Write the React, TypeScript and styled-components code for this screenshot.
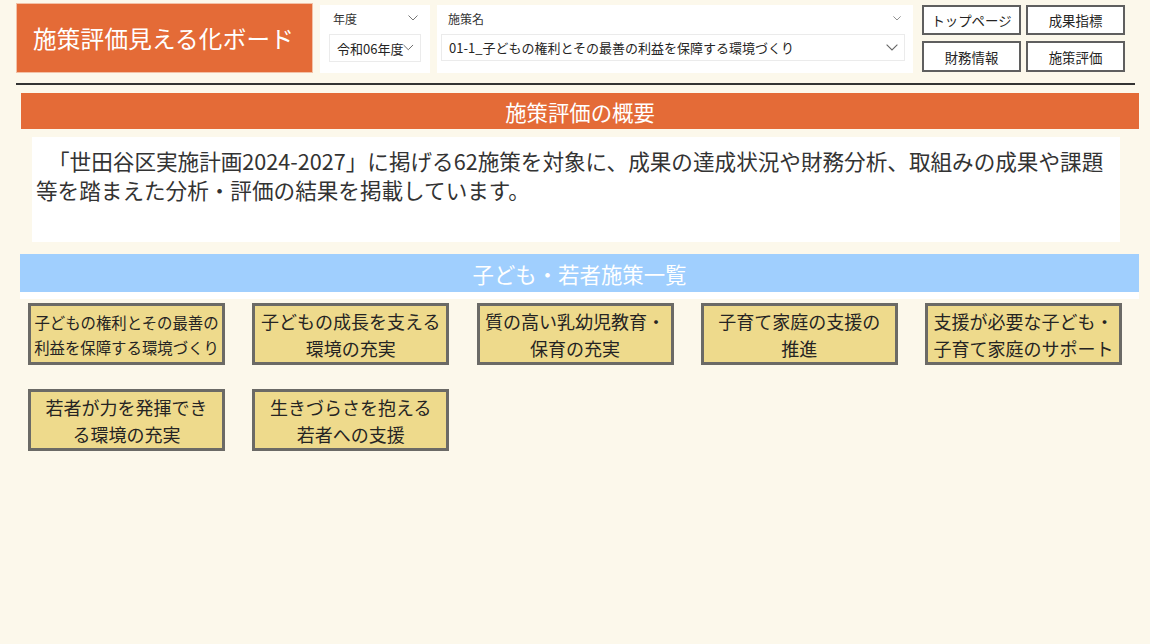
import React from "react";
import styled, { createGlobalStyle } from "styled-components";

const GlobalStyle = createGlobalStyle`
  html, body {
    margin: 0;
    padding: 0;
    background: #fcf8eb;
  }
  body {
    font-family: "Noto Sans CJK JP", "Noto Sans", sans-serif;
    color: #333;
  }
`;

const Page = styled.div`
  width: 1150px;
  height: 644px;
  background: #fcf8eb;
  overflow: hidden;
`;

const Header = styled.div`
  display: flex;
  align-items: flex-start;
  padding: 3px 0 0 16px;
`;

const TitleBox = styled.div`
  width: 297px;
  height: 70px;
  box-sizing: border-box;
  background: #e46b37;
  border: 1px solid #f3c1a6;
  color: #fff;
  font-size: 23.6px;
  display: flex;
  align-items: center;
  padding-left: 16px;
  letter-spacing: 0.2px;
`;

const Slicer = styled.div<{ $width: number; $ml: number }>`
  width: ${(p) => p.$width}px;
  height: 68px;
  margin: 2px 0 0 ${(p) => p.$ml}px;
  background: #fff;
  box-sizing: border-box;
`;

const SlicerHead = styled.div<{ $pl: number }>`
  display: flex;
  justify-content: space-between;
  align-items: center;
  height: 24px;
  padding: 1px 12px 0 ${(p) => p.$pl}px;
  font-size: 12px;
  color: #333;
`;

const Dropdown = styled.div<{ $width: number; $ml: number; $h: number; $fs: number }>`
  width: ${(p) => p.$width}px;
  height: ${(p) => p.$h}px;
  margin: 4px 0 0 ${(p) => p.$ml}px;
  box-sizing: border-box;
  border: 1px solid #ebebeb;
  display: flex;
  align-items: center;
  justify-content: space-between;
  padding: 0 6px 0 7px;
  font-size: ${(p) => p.$fs}px;
  color: #252423;
  white-space: nowrap;
`;

const ButtonGrid = styled.div`
  display: grid;
  grid-template-columns: 99px 99px;
  grid-template-rows: 30px 31px;
  column-gap: 5px;
  row-gap: 6px;
  margin: 2px 0 0 9px;
`;

const NavButton = styled.button`
  background: #fff;
  border: 2px solid #5f5f5f;
  box-sizing: border-box;
  font-family: "Noto Sans CJK JP", sans-serif;
  font-size: 13.4px;
  color: #252423;
  padding: 0;
  cursor: pointer;
`;

const Divider = styled.div`
  width: 1119px;
  height: 2px;
  margin: 10px 0 0 16px;
  background: #333;
`;

const SectionBar = styled.div<{ $bg: string; $h: number; $ml: number; $w: number; $mt: number }>`
  width: ${(p) => p.$w}px;
  height: ${(p) => p.$h}px;
  margin: ${(p) => p.$mt}px 0 0 ${(p) => p.$ml}px;
  background: ${(p) => p.$bg};
  color: #fff;
  font-size: 21.4px;
  display: flex;
  align-items: center;
  justify-content: center;
  box-sizing: border-box;
`;

const WhiteStrip = styled.div`
  width: 1119px;
  height: 7px;
  margin-left: 20px;
  background: #fff;
`;

const Summary = styled.div`
  width: 1088px;
  height: 105px;
  margin: 8px 0 0 32px;
  background: #fff;
  box-sizing: border-box;
  padding: 9px 0 0 4px;
  font-size: 21.6px;
  line-height: 29px;
  color: #333;
  text-indent: 12px;
  white-space: nowrap;
`;

const CardGrid = styled.div`
  width: 1094px;
  margin: 4px 0 0 28px;
  display: grid;
  grid-template-columns: repeat(5, 197px);
  justify-content: space-between;
  row-gap: 24px;
`;

const Card = styled.div<{ $small?: boolean }>`
  height: 62px;
  box-sizing: border-box;
  background: #eeda8c;
  border: 3px solid #6b6a66;
  display: flex;
  align-items: center;
  justify-content: center;
  text-align: center;
  font-size: ${(p) => (p.$small ? "15.4px" : "18px")};
  line-height: ${(p) => (p.$small ? "25px" : "27px")};
  color: #252423;
  padding-top: 1px;
  cursor: pointer;
`;

const Chevron = ({ size = 10 }: { size?: number }) => (
  <svg width={size} height={size * 0.6} viewBox="0 0 10 6">
    <polyline points="0.5,0.5 5,5 9.5,0.5" fill="none" stroke="#666" strokeWidth="0.9" />
  </svg>
);

const cards: { label: React.ReactNode; small?: boolean }[] = [
  { label: <>子どもの権利とその最善の<br />利益を保障する環境づくり</>, small: true },
  { label: <>子どもの成長を支える<br />環境の充実</> },
  { label: <>質の高い乳幼児教育・<br />保育の充実</> },
  { label: <>子育て家庭の支援の<br />推進</> },
  { label: <>支援が必要な子ども・<br />子育て家庭のサポート</> },
  { label: <>若者が力を発揮でき<br />る環境の充実</> },
  { label: <>生きづらさを抱える<br />若者への支援</> },
];

export default function App() {
  return (
    <Page>
      <GlobalStyle />
      <Header>
        <TitleBox>施策評価見える化ボード</TitleBox>
        <Slicer $width={110} $ml={7}>
          <SlicerHead $pl={13}>
            <span>年度</span>
            <Chevron size={10} />
          </SlicerHead>
          <Dropdown $width={92} $ml={9} $h={28} $fs={13}>
            <span>令和06年度</span>
            <Chevron size={12} />
          </Dropdown>
        </Slicer>
        <Slicer $width={476} $ml={7}>
          <SlicerHead $pl={11}>
            <span>施策名</span>
            <Chevron size={8} />
          </SlicerHead>
          <Dropdown $width={464} $ml={4} $h={27} $fs={13}>
            <span>01-1_子どもの権利とその最善の利益を保障する環境づくり</span>
            <Chevron size={12} />
          </Dropdown>
        </Slicer>
        <ButtonGrid>
          <NavButton>トップページ</NavButton>
          <NavButton>成果指標</NavButton>
          <NavButton>財務情報</NavButton>
          <NavButton>施策評価</NavButton>
        </ButtonGrid>
      </Header>
      <Divider />
      <SectionBar $bg="#e46b37" $h={36} $ml={21} $w={1118} $mt={8}>
        施策評価の概要
      </SectionBar>
      <Summary>
        「世田谷区実施計画2024-2027」に掲げる62施策を対象に、成果の達成状況や財務分析、取組みの成果や課題
        <br />
        等を踏まえた分析・評価の結果を掲載しています。
      </Summary>
      <SectionBar $bg="#a0cffe" $h={38} $ml={20} $w={1119} $mt={12}>
        子ども・若者施策一覧
      </SectionBar>
      <WhiteStrip />
      <CardGrid>
        {cards.map((c, i) => (
          <Card key={i} $small={c.small}>
            <span>{c.label}</span>
          </Card>
        ))}
      </CardGrid>
    </Page>
  );
}
